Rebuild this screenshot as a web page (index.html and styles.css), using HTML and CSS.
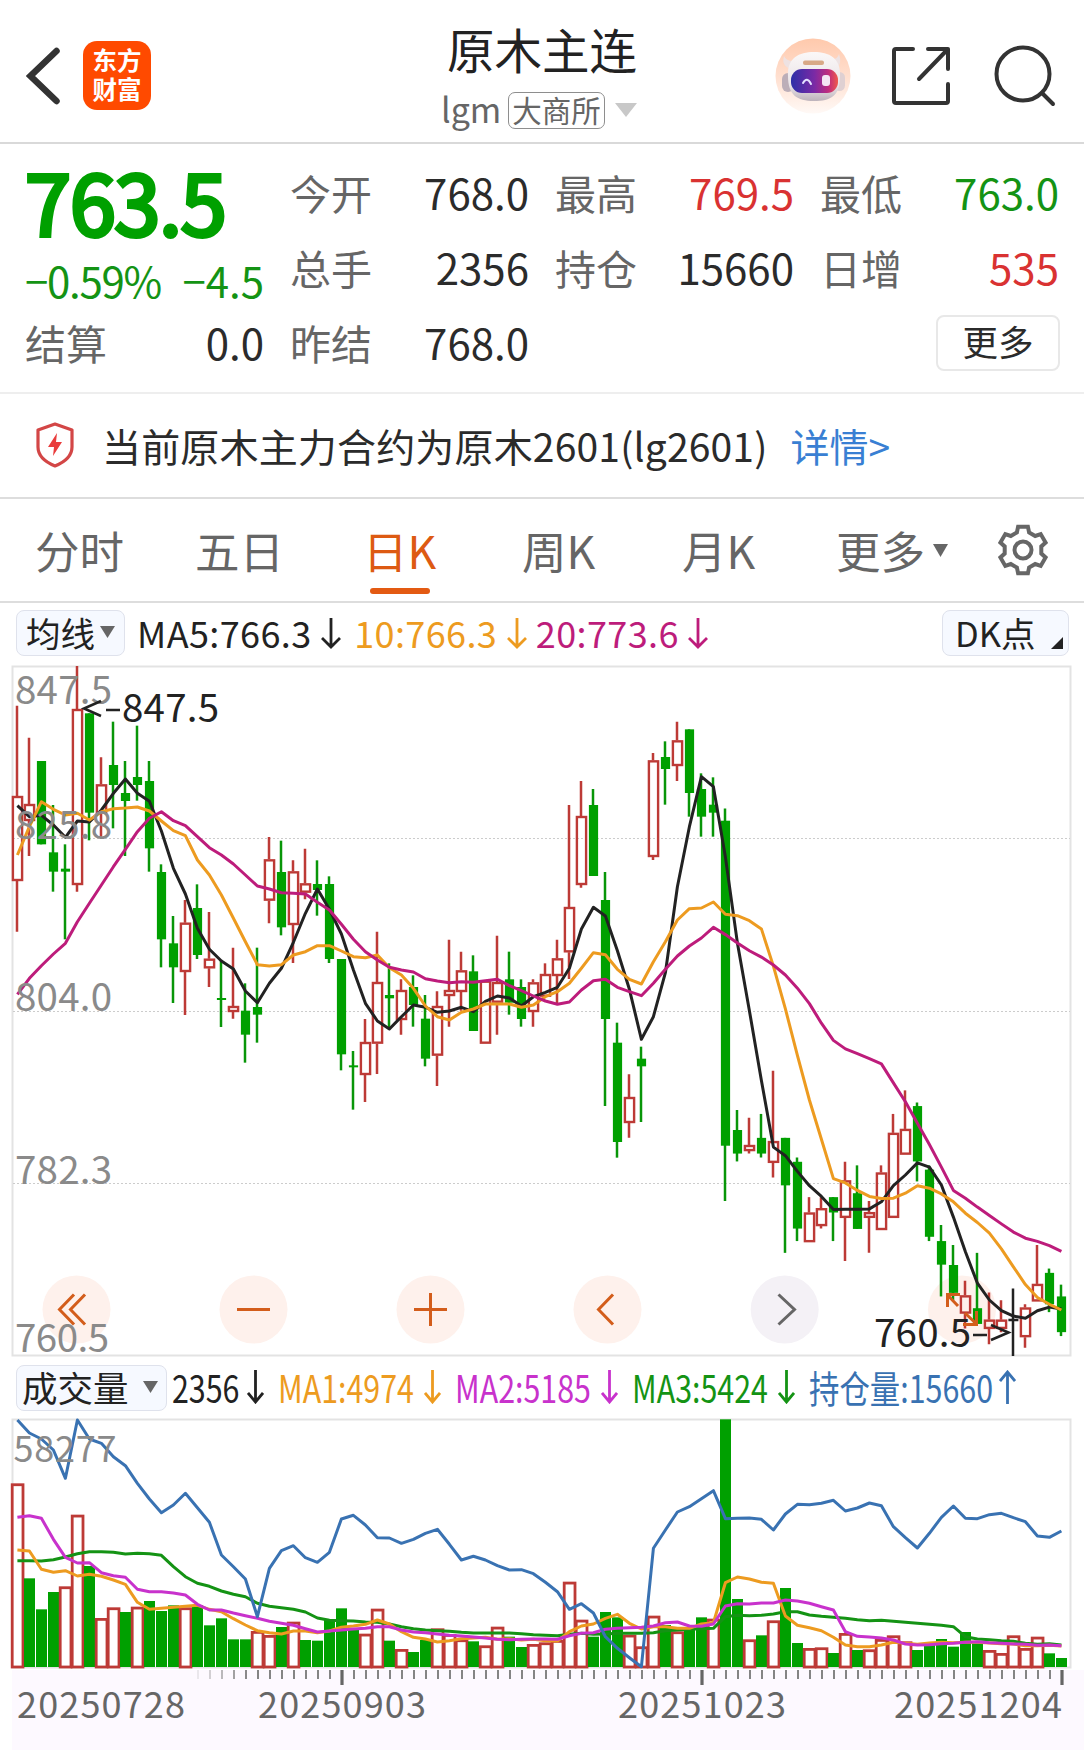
FILE: index.html
```html
<!DOCTYPE html>
<html lang="zh-CN">
<head>
<meta charset="utf-8">
<title>原木主连</title>
<link rel="stylesheet" href="styles.css">
</head>
<body>
<header class="header">
  <div class="header-left">
    <svg class="back" width="34" height="58" viewBox="0 0 34 58"><path d="M30 4 4 29 30 54"/></svg>
    <div class="logo"><span>东方</span><span>财富</span></div>
  </div>
  <div class="heading">
    <h1>原木主连</h1>
    <div class="sub"><span class="code">lgm</span><span class="exchange">大商所</span><svg width="22" height="14" viewBox="0 0 22 14"><path d="M0 0H22L11 14Z" fill="#c8c8c8"/></svg></div>
  </div>
  <div class="header-right">
    <svg class="robot" width="76" height="76" viewBox="0 0 76 76">
      <defs>
        <linearGradient id="halo" x1="0" y1="0" x2="0" y2="1"><stop offset="0" stop-color="#ffc9ac"/><stop offset=".55" stop-color="#ffe1d2"/><stop offset="1" stop-color="#fff9f6"/></linearGradient>
        <linearGradient id="visor" x1="0" y1="0" x2="1" y2="0"><stop offset="0" stop-color="#2c2fa8"/><stop offset=".5" stop-color="#7b2aa5"/><stop offset=".8" stop-color="#c02c7d"/><stop offset="1" stop-color="#ef5a4c"/></linearGradient>
        <linearGradient id="shell" x1="0" y1="0" x2="0" y2="1"><stop offset="0" stop-color="#fbf8f8"/><stop offset=".7" stop-color="#e9e3e6"/><stop offset="1" stop-color="#bdb3bb"/></linearGradient>
      </defs>
      <circle cx="38" cy="38" r="37.5" fill="url(#halo)"/>
      <path d="M9 18q2 5 9 5l-2 8q-10-3-7-13zM64 16q4 11-4 15l-4-9q7-1 8-6z" fill="#eee2e2"/>
      <rect x="7" y="35" width="12" height="19" rx="6" fill="#bcaeb8"/><rect x="59" y="34" width="11" height="19" rx="5.500" fill="#dfd0d2"/>
      <path d="M13 38C12 20 24 14 39 14S66 20 65 38C65 58 56 63 39 63S13 57 13 38Z" fill="url(#shell)"/>
      <rect x="28" y="22.500" width="21" height="4.500" rx="2" fill="#d8a987"/>
      <rect x="16" y="31" width="47" height="24" rx="11" fill="url(#visor)"/>
      <path d="M28 45q4-7 8 1" fill="none" stroke="#e3e0ff" stroke-width="2" stroke-linecap="round"/>
      <rect x="47" y="37" width="8" height="11" rx="3" fill="#f4e5f4"/>
    </svg>
    <svg class="line-icon" width="60" height="60" viewBox="0 0 60 60"><path d="M22 3H5Q3 3 3 5V55Q3 57 5 57H55Q57 57 57 55V38M37 3H57V23M57 3 28 33"/></svg>
    <svg class="line-icon" width="62" height="62" viewBox="0 0 62 62"><circle cx="29" cy="29" r="26.500"/><path d="M48 48 59 59"/></svg>
  </div>
</header>

<section class="quote">
  <div class="last">
    <div class="price">763.5</div>
    <div class="change"><span>−0.59%</span><span>−4.5</span></div>
    <div class="pair"><label>结算</label><b>0.0</b></div>
  </div>
  <div class="stats">
    <div class="pair"><label>今开</label><b>768.0</b></div>
    <div class="pair"><label>最高</label><b class="up">769.5</b></div>
    <div class="pair"><label>最低</label><b class="down">763.0</b></div>
    <div class="pair"><label>总手</label><b>2356</b></div>
    <div class="pair"><label>持仓</label><b>15660</b></div>
    <div class="pair"><label>日增</label><b class="up">535</b></div>
    <div class="pair"><label>昨结</label><b>768.0</b></div>
    <div></div>
    <button class="more">更多</button>
  </div>
</section>

<section class="notice">
  <svg width="40" height="46" viewBox="0 0 40 46"><path d="M20 2 37 8V25Q37 37 20 44Q3 37 3 25V8Z" fill="none" stroke="#d34646" stroke-width="3.200" stroke-linejoin="round"/><path d="M22 11 13 25H19L18 34 27 20H21Z" fill="#e93c3c"/></svg>
  <span class="notice-text">当前原木主力合约为原木2601(lg2601)</span>
  <a class="detail">详情&gt;</a>
</section>

<nav class="tabs">
  <span>分时</span><span>五日</span><span class="active">日K</span><span>周K</span><span>月K</span>
  <span class="tab-more">更多<svg width="15" height="13" viewBox="0 0 15 13"><path d="M0 0H15L7.500 13Z" fill="#666"/></svg></span>
  <svg class="gear" width="54" height="54" viewBox="-27 -27 54 54"><path id="gear"/><circle r="8.500"/></svg>
</nav>

<div class="legend ma-legend">
  <span class="chip chip-ma">均线<svg width="15" height="12" viewBox="0 0 15 12"><path d="M0 0H15L7.500 12Z" fill="#666"/></svg></span>
  <span class="item c-ink">MA5:766.3<svg class="arrow" viewBox="0 0 20 32"><path d="M10 1V30M1 21 10 30 19 21"/></svg></span>
  <span class="item c-orange">10:766.3<svg class="arrow" viewBox="0 0 20 32"><path d="M10 1V30M1 21 10 30 19 21"/></svg></span>
  <span class="item c-pink">20:773.6<svg class="arrow" viewBox="0 0 20 32"><path d="M10 1V30M1 21 10 30 19 21"/></svg></span>
  <span class="chip chip-dk">DK点<svg width="12" height="12" viewBox="0 0 12 12"><path d="M12 0V12H0Z" fill="#222"/></svg></span>
</div>

<svg class="chart" width="1084" height="692" viewBox="0 665 1084 692">
  <g class="frame"><rect x="12.500" y="666.500" width="1058" height="689"/></g>
  <g class="grid"><path d="M13 838.500H1070M13 1011.500H1070M13 1183.500H1070"/></g>
  <g class="pads"><circle cx="76.500" cy="1309.500" r="34"/><circle cx="253.500" cy="1309.500" r="34"/><circle cx="430.500" cy="1309.500" r="34"/><circle cx="607.500" cy="1309.500" r="34"/><circle class="pad-off" cx="784.700" cy="1309.500" r="34"/><circle cx="962" cy="1309.500" r="34"/></g>
  <g id="candles"></g>
  <g id="price-lines" class="lines"></g>
  <g class="glyphs"><path d="M74 1294.500 59.500 1309.500 74 1324.500M85 1294.500 70.500 1309.500 85 1324.500M237 1309.500H270M414 1309.500H447M430.500 1293V1326M613 1294.500 598.500 1309.500 613 1324.500"/><path d="M958 1306 947.500 1295M947.500 1307V1294.500H960M965 1313 976.500 1324M976.500 1311V1324.500H963"/><path class="glyph-off" d="M778.500 1294.500 794.500 1309.500 778.500 1324.500"/></g>
  <g class="axis">
    <text x="15" y="704" textLength="97">847.5</text><text x="15" y="839" textLength="97">825.8</text><text x="15" y="1011" textLength="97">804.0</text><text x="15" y="1184" textLength="97">782.3</text><text x="15" y="1352" textLength="94">760.5</text>
  </g>
  <g class="mark"><path d="M101 701 84 708.500 101 716M106 710H120M973 1335H987M991 1325 1008.500 1332.500 991 1340"/><text x="122" y="722" textLength="97">847.5</text><text x="874" y="1347" textLength="97">760.5</text></g>
</svg>

<div class="legend vol-legend">
  <span class="chip chip-vol">成交量<svg width="15" height="12" viewBox="0 0 15 12"><path d="M0 0H15L7.500 12Z" fill="#666"/></svg></span>
  <span class="item c-ink w1"><i>2356</i><svg class="arrow" viewBox="0 0 17 34"><path d="M8.500 0V32M1 23 8.500 32 16 23"/></svg></span>
  <span class="item c-orange w2"><i>MA1:4974</i><svg class="arrow" viewBox="0 0 17 34"><path d="M8.500 0V32M1 23 8.500 32 16 23"/></svg></span>
  <span class="item c-magenta w3"><i>MA2:5185</i><svg class="arrow" viewBox="0 0 17 34"><path d="M8.500 0V32M1 23 8.500 32 16 23"/></svg></span>
  <span class="item c-green w4"><i>MA3:5424</i><svg class="arrow" viewBox="0 0 17 34"><path d="M8.500 0V32M1 23 8.500 32 16 23"/></svg></span>
  <span class="item c-blue w5"><i>持仓量:15660</i><svg class="arrow" viewBox="0 0 17 34"><path d="M8.500 34V2M1 11 8.500 2 16 11"/></svg></span>
</div>

<svg class="chart" width="1084" height="332" viewBox="0 1418 1084 332">
  <rect x="12" y="1670" width="1072" height="80" fill="#fdf9ff"/>
  <g class="frame"><rect x="12.500" y="1419.500" width="1058" height="248"/></g>
  <g id="volumes"></g>
  <g id="volume-lines" class="lines"></g>
  <g class="axis"><text class="vol-max" x="13.500" y="1462" textLength="103">58277</text></g>
  <g id="ticks"></g>
  <g class="dates"><text x="17" y="1718" textLength="168">20250728</text><text x="258" y="1718" textLength="168">20250903</text><text x="618" y="1718" textLength="168">20251023</text><text x="894" y="1718" textLength="168">20251204</text></g>
</svg>
<script src="chart.js"></script>
</body>
</html>
```
FILE: styles.css
```css
* { box-sizing: border-box; }
body {
  margin: 0;
  width: 1084px;
  background: #fff;
  color: #2b2b2b;
  font-family: "Noto Sans CJK SC", sans-serif;
  font-size: 42px;
  line-height: 1;
}
svg { display: block; flex: none; }
h1, b, i { font-weight: 400; font-style: normal; margin: 0; }

.header {
  height: 144px;
  border-bottom: 2px solid #d9d9d9;
  display: grid;
  grid-template-columns: 360px 1fr 360px;
}
.header-left { display: flex; align-items: center; gap: 22px; padding: 9px 0 0 26px; }
.back { width: 35px; }
.back path { fill: none; stroke: #333; stroke-width: 6.5; stroke-linecap: round; }
.logo {
  width: 68px; height: 69px; border-radius: 14px; background: #ff4a00; color: #fff;
  font-size: 24.5px; font-weight: 700; line-height: 29px; padding-bottom: 4px;
  display: flex; flex-direction: column; align-items: center; justify-content: center;
}
.heading { display: flex; flex-direction: column; align-items: center; padding-top: 24px; }
h1 { font-size: 47.5px; line-height: 50px; color: #222; }
.sub { display: flex; align-items: center; height: 36px; margin-top: 18px; padding-right: 57px; margin-right: -51px; }
.code { width: 67px; font-size: 34px; color: #666; line-height: 34px; margin-top: -2px; }
.exchange {
  width: 97px; height: 37px; border: 1.5px solid #8e8e8e; border-radius: 7px;
  font-size: 29.5px; line-height: 32px; color: #666; text-align: center; margin-right: 10px;
}
.header-right { display: flex; align-items: center; padding: 9px 0 0 51px; }
.robot { margin-right: 40px; }
.line-icon { fill: none; stroke: #333; stroke-width: 4; stroke-linecap: round; stroke-linejoin: round; }
.line-icon + .line-icon { margin-left: 43px; }

.quote { height: 250px; border-bottom: 2px solid #eee; display: grid; grid-template-columns: 239px 769px; column-gap: 26px; padding: 10px 0 0 25px; }
.last { display: flex; flex-direction: column; }
.price { height: 96px; line-height: 92px; font-size: 83px; letter-spacing: -1.4px; color: #00a000; -webkit-text-stroke: 4px #00a000; }
.change { height: 56px; line-height: 59px; display: flex; justify-content: space-between; color: #149314; font-size: 42px; }
.change span:first-child { letter-spacing: -1.3px; }
.last .pair { margin-top: -1px; }
.stats { display: grid; grid-template-columns: repeat(3, 239px); column-gap: 26px; grid-template-rows: repeat(3, 75px); padding-top: 1px; }
.pair { display: flex; justify-content: space-between; height: 75px; line-height: 74px; }
.pair label { font-size: 41px; color: #666; }
.pair b { font-size: 42px; }
.pair .up { color: #d93232; }
.pair .down { color: #149314; }
.more {
  justify-self: end; width: 124px; height: 56px; margin: 10px -1px 0 0; padding: 0 0 4px;
  background: #fff; border: 2px solid #e8e8e8; border-radius: 8px;
  font: 35.5px/48px "Noto Sans CJK SC", sans-serif; color: #2b2b2b;
}

.notice { height: 105px; border-bottom: 2px solid #ddd; display: flex; align-items: center; padding: 0 0 1px 35px; font-size: 39px; }
.notice-text { margin-left: 27px; letter-spacing: .17px; }
.detail { margin-left: 23px; color: #397fd3; }

.tabs { height: 104px; border-bottom: 2px solid #ddd; display: flex; align-items: center; padding-left: 35px; font-size: 44.5px; color: #666; }
.tabs span { width: 160px; height: 102px; line-height: 102px; position: relative; }
.tabs span:nth-child(2) { width: 168px; }
.tabs span:nth-child(3) { width: 159px; }
.tabs span:nth-child(5) { width: 154px; }
.tabs .active { color: #dd5a12; }
.active::after { content: ""; position: absolute; left: 7px; bottom: 7px; width: 60px; height: 6px; border-radius: 3px; background: #e35a12; }
.tabs .tab-more { display: flex; align-items: center; gap: 8px; }
.gear { fill: none; stroke: #666; stroke-width: 4; }

.legend { display: flex; align-items: center; }
.ma-legend { height: 62px; padding: 0 15px 2px 16px; font-size: 36px; }
.vol-legend { height: 61px; padding-left: 16px; font-size: 38px; }
.chip { height: 46px; border: 1.5px solid #dfe2ec; border-radius: 8px; background: #f6f9ff; color: #222; display: flex; align-items: center; line-height: 40px; padding-bottom: 2px; }
.chip-ma { width: 109px; padding-left: 9px; gap: 5px; font-size: 34.500px; margin-right: 12px; }
.chip-dk { width: 127px; padding-left: 12px; font-size: 34.500px; margin-left: auto; justify-content: space-between; padding-right: 5px; }
.chip-dk svg { align-self: flex-end; margin-bottom: 4px; }
.chip-vol { width: 151px; padding-left: 5px; gap: 14px; font-size: 35.5px; margin-right: 5px; }
.item { display: flex; align-items: center; line-height: 42px; margin-top: -2px; white-space: nowrap; }
.arrow { fill: none; stroke: currentColor; stroke-width: 2.8; }
.ma-legend .item { letter-spacing: .4px; }
.ma-legend .arrow { width: 20px; height: 32px; margin: 2px 13px 0 9.5px; }
.ma-legend .c-orange .arrow { margin-right: 9px; }
.vol-legend .arrow { width: 17px; height: 34px; }
.vol-legend .item { justify-content: space-between; }
.vol-legend i { width: 0; transform: scaleX(.8); transform-origin: 0 50%; }
.w1 { width: 92px; margin-right: 14px; }
.w2, .w3, .w4 { width: 163px; margin-right: 14px; }
.w5 { width: 207px; }
.c-ink { color: #222; }
.c-orange { color: #ed9b20; }
.c-pink { color: #bd1c7b; }
.c-magenta { color: #c832cc; }
.c-green { color: #149314; }
.c-blue { color: #3972b2; }

.frame rect { fill: none; stroke: #e3e3e3; stroke-width: 2; }
.grid path { stroke: #ccc; stroke-width: 1.2; stroke-dasharray: 2 2; }
.pads circle { fill: #fef1ec; }
.pads .pad-off { fill: #f4f1f6; }
.glyphs path { fill: none; stroke: #d35d1b; stroke-width: 3; }
.glyphs .glyph-off { stroke: #666; }
.chart text { font-size: 38.500px; }
.axis text { fill: #8a8a8a; }
.chart .vol-max, .chart .dates text { font-size: 36px; }
.dates text { fill: #666; }
.mark path { fill: none; stroke: #222; stroke-width: 2.6; }
.mark text { fill: #222; }
.lines polyline { fill: none; stroke-width: 3; stroke-linejoin: round; }
.rise { fill: none; stroke: #bd3a36; stroke-width: 2.4; }
.volume-rise { fill: #fff; stroke: #bd3a36; stroke-width: 2.8; }
.rise-wick { stroke: #bd3a36; stroke-width: 2.5; }
.fall { fill: #00a000; }
.fall-wick { stroke: #089608; stroke-width: 2.5; }
.flat-wick { stroke: #222; stroke-width: 2.5; }
.tick { stroke: #777; stroke-width: 1.8; }
.tick-major { stroke: #666; stroke-width: 3.200; }
```
FILE: chart.js
```js
// Horizontal position of a trading day
const dayX = i => 17.4 + 12 * i;
const draw = (id, markup) => { document.getElementById(id).innerHTML = markup; };
const scaled = (list, origin, factor) => list.map(v => origin + v / factor);

// R = close above open, G = close below open, K = unchanged; then high, top, bottom, low
const sessions = [
  [660, 3, `R 137 408 663 815|R 233 432 483 588|G 303 303 553 553|G 435 577 635 695|G 553 626 635 838|R 18 147 675 695|G 160 160 458 541|R 292 373 460 530|G 185 315 375 505|G 303 399 423 588|G 197 351 375 422|G 303 363 565 635|G 613 636 838 922|G 768 850 922 1029|R 720 788 936 1065|G 673 744 885 897|R 756 896 925 981|G 900 1014 1020 1101|R 863 1038 1056 1076|G 970 1052 1124 1208|G 863 1041 1064 1148|R 531 598 722 790|G 542 636 802 826|R 601 634 795 909|R 566 670 698 718|G 601 672 690 767|G 649 672 897 909|G 897 897 1183 1231|G 1173 1216 1222 1349`],
  [700, 3, `R 957 1026 1125 1206|R 695 846 1031 1122|G 790 885 895 985|R 838 870 960 1004|G 826 861 915 980|G 885 956 1076 1099|R 874 918 1067 1158|R 719 870 888 980|R 755 811 876 932|G 766 814 993 993|R 842 842 1031 1031|R 707 846 908 1004|G 755 838 908 944|G 838 861 957 980|R 838 847 936 980|R 790 822 890 890|R 719 775 828 910|R 315 621 757 837|R 243 348 555 563|G 267 315 528 528|G 516 600 957 1218|G 968 1028 1326 1373|R 1123 1191 1269 1313|G 1040 1076 1099 1266|R 159 181 471 480|G 124 171 207 314|R 65 121 198 243|G 88 88 279 350|G 220 267 350 410|G 232 314 338 410`],
  [800, 2.8, `G 24 58 968 1123|G 868 924 990 1012|R 890 966 983 990|G 879 946 990 1001|R 758 955 1016 1057|G 946 946 1079 1268|G 1001 1013 1200 1235|R 1112 1155 1238 1238|R 1112 1143 1193 1200|G 1112 1112 1155 1235|R 1013 1065 1170 1291|G 1023 1101 1201 1201|R 1123 1154 1170 1268|R 1023 1043 1204 1204|R 879 932 1170 1170|R 813 921 993 993|G 847 857 1012 1068|G 1023 1035 1223 1235|G 1190 1235 1301 1390|G 1246 1302 1380 1400|R 1346 1387 1438 1480|G 1268 1423 1467 1467|R 1379 1455 1481 1524|R 1401 1455 1481 1490|K 1368 1453 1458 1557|R 1412 1421 1504 1534|R 1246 1355 1404 1404|G 1312 1324 1412 1434|G 1357 1390 1490 1501`]
];
const candles = sessions.flatMap(([origin, factor, rows]) => rows.split('|').map(row => {
  const [kind, ...v] = row.split(' ');
  return [kind, ...scaled(v.map(Number), origin, factor)];
}));
draw('candles', candles.map(([kind, high, top, bottom, low], i) => {
  const x = dayX(i);
  if (kind === 'G') return `<path class="fall-wick" d="M${x - .4} ${high}V${low}"/><rect class="fall" x="${x - 4.5}" y="${top}" width="9.2" height="${bottom - top}"/>`;
  if (kind === 'K') return `<path class="flat-wick" d="M${x - .4} ${high}V${low}M${x - 5} ${top + 1}H${x + 5}"/>`;
  return `<path class="rise-wick" d="M${x - .4} ${high}V${top}M${x - .4} ${bottom}V${low}"/><rect class="rise" x="${x - 4.5}" y="${top + 1}" width="9.200" height="${bottom - top - 2}"/>`;
}).join(''));

const polyline = (color, parts) => {
  const ys = parts.flatMap(([origin, factor, list]) => scaled(list, origin, factor));
  return `<polyline stroke="${color}" points="${ys.map((y, i) => `${dayX(i)},${y.toFixed(1)}`).join(' ')}"/>`;
};

draw('price-lines',
  polyline('#222', [
    [660, 3, [437,470,466,495,532,483,486,450,400,357,400,424,513,625,702,805,868,903,927,993,1028,970,925,847,760,687,748,822,930]],
    [700, 3, [910,963,987,950,915,922,937,933,922,935,904,888,894,918,890,877,862,805,687,622,648,752,868,1018,950,818,560,380,230,260]],
    [800, 2.8, [160,400,590,785,972,996,1040,1080,1110,1147,1146,1146,1145,1125,1080,1050,1016,1028,1078,1168,1265,1353,1400,1430,1445,1451,1430,1420,1425]]]) +
  polyline('#ed9b20', [
    [660, 3, [585,500,425,448,465,460,480,455,446,444,441,453,483,512,527,600,645,705,775,845,914,918,914,885,875,857,857,873,890]],
    [700, 3, [773,765,803,825,865,918,950,960,937,927,912,912,912,922,915,890,875,850,805,758,764,808,838,852,785,725,660,626,624,606]],
    [800, 2.8, [320,324,338,361,465,585,715,840,950,1060,1072,1093,1110,1116,1115,1101,1080,1087,1103,1125,1157,1183,1213,1257,1307,1357,1393,1412,1428]]]) +
  polyline('#bd1c7b', [
    [660, 3, [1003,955,917,882,850,785,730,675,620,568,515,475,455,482,497,530,563,585,612,645,678,687,698,700,702,727,750,793,838]],
    [700, 3, [755,780,802,810,816,836,843,848,845,847,842,838,857,872,888,903,913,906,870,842,838,862,875,887,850,808,768,738,714,682]],
    [800, 2.8, [377,400,422,440,462,490,527,570,625,673,697,710,724,739,792,845,905,965,1028,1093,1115,1140,1163,1187,1210,1227,1236,1248,1264]]]));

const volumeTops = [
  ...scaled([220,505,598,546,529,314,468,624,592,606,590,573,603,586,592,585,646,625,688,688,663,675,651,635,690,692,628,595,660,671,596,692,717,726,690,655,672,688,694,706,650,680,711,702,697,690,515,629,680,606,622,674,709,617,645,664,660,622,626,28], 1410, 3),
  ...scaled([717,838,826,781,684,849,864,862,879,819,870,868,837,826,844,870,855,837,860,816,850,870,879,826,864,830,880,894], 1360, 3)
];
const volumeKinds = 'RGGGRRGRRGRGGGRGGGGGRRGRGGGGGRRGRGGRRRGRRGGRRRRRGGGRRRGRGGRGGRGRGGRRGRGRRRRGGGGGGRRRRRGG';
draw('volumes', volumeTops.map((top, i) => volumeKinds[i] === 'G'
  ? `<rect class="fall" x="${dayX(i) - 5.4}" y="${top}" width="11" height="${1667 - top}"/>`
  : `<rect class="volume-rise" x="${dayX(i) - 5.2}" y="${top + 1.4}" width="10.8" height="${1665.600 - top}"/>`).join(''));

draw('volume-lines',
  polyline('#149314', [
    [1410, 3, [452,452,453,449,441,431,425,425,427,432,430,431,436,470,500,520,529,543,553,560,580,589,593,598,606,624,631,632,633,636,637,642,650,656,660,662,664,667,669,669,669,669,671,674,676,677,673,670,673,672,670,670,670,668,662,660,658,656,655]],
    [1360, 3, [770,766,767,766,762,755,755,765,769,772,775,779,782,781,784,787,790,793,796,800,830,837,839,842,844,850,853,851,855]]]) +
  polyline('#ed9b20', [
    [1410, 3, [420,423,478,487,482,498,493,499,510,523,577,598,595,592,589,586,598,605,626,645,662,668,672,663,663,668,663,652,648,643,630,642,665,682,687,696,692,686,684,682,688,686,690,688,692,693,665,648,642,625,613,640,657,650,650,655,655,642,638]],
    [1360, 3, [668,651,657,667,670,768,796,803,812,832,855,860,860,855,847,850,853,849,847,848,847,847,849,851,852,857,857,856,858]]]) +
  polyline('#c832cc', [
    [1410, 3, [322,317,325,388,442,459,458,488,497,502,538,545,545,549,555,583,600,600,609,617,625,634,640,646,656,666,663,660,657,655,650,650,660,666,668,672,676,678,681,684,688,689,688,687,687,688,677,670,668,658,655,653,652,648,638,636,648,649,642]],
    [1360, 3, [738,731,732,729,729,720,723,730,740,750,815,829,831,834,840,852,855,854,851,850,847,845,848,850,852,853,856,855,857]]]) +
  polyline('#3972b2', [
    [1410, 3, [30,69,87,120,205,30,87,100,140,167,220,267,308,285,250,293,337,435,470,507,620,475,422,407,443,457,427,327,316,345,383,384,400,388,370,358,403,450,439,450,467,480,479,491,517,545,598,581,609,680,715,743,770,415,360,306,290,266,242]],
    [1360, 3, [476,475,474,478,510,462,433,434,430,421,453,444,429,437,500,533,564,520,472,438,475,476,464,460,473,485,528,532,513]]]));

// Date ruler, fading in at the left
let ticks = '';
for (let i = 15; i < 88; i++) {
  const major = i === 27 || i === 57 || i === 87;
  const x = dayX(i) + .6;
  ticks += `<path class="${major ? 'tick-major' : 'tick'}" opacity="${Math.min(1, .15 + (i - 15) * .2)}" d="M${x} 1670V${major ? 1685 : 1679}"/>`;
}
draw('ticks', ticks);

// Six-tooth cog outline
const cog = [];
for (let k = 0; k < 6; k++) {
  for (const [deg, r] of [[-19, 18.6], [-12, 23.8], [12, 23.8], [19, 18.6]]) {
    const a = (k * 60 - 90 + deg) * Math.PI / 180;
    cog.push(`${(r * Math.cos(a)).toFixed(1)} ${(r * Math.sin(a)).toFixed(1)}`);
  }
}
document.getElementById('gear').setAttribute('d', `M${cog.join('L')}Z`);
```
